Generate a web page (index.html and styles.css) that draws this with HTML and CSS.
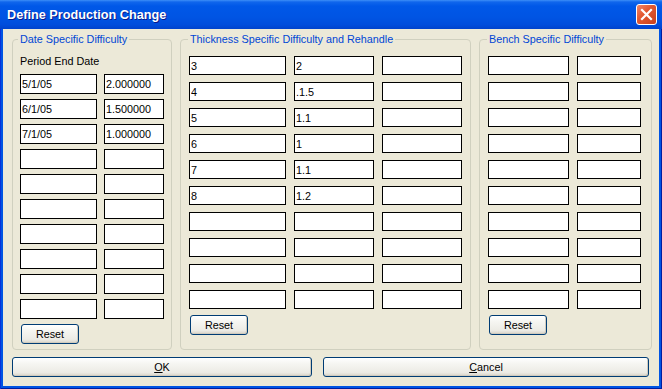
FILE: index.html
```html
<!DOCTYPE html>
<html lang="en">
<head>
  <meta charset="UTF-8" />
  <title>Define Production Change</title>
  <link rel="stylesheet" href="styles.css">
</head>
<body>
  <div class="window">
    <div class="titlebar">
      <span class="title">Define Production Change</span>
      <span class="close">
        <svg width="13" height="13" viewBox="0 0 13 13">
          <path d="M2 2 L11 11 M11 2 L2 11" stroke="#fff" stroke-width="2.2" stroke-linecap="square" />
        </svg>
      </span>
    </div>

    <div class="client">
      <div class="groups">
        <fieldset class="group group-date">
          <legend>Date Specific Difficulty</legend>
          <div class="period">Period End Date</div>
          <div class="grid grid-date">
            <input type="text" value="5/1/05"><input type="text" value="2.000000">
            <input type="text" value="6/1/05"><input type="text" value="1.500000">
            <input type="text" value="7/1/05"><input type="text" value="1.000000">
            <input type="text"><input type="text">
            <input type="text"><input type="text">
            <input type="text"><input type="text">
            <input type="text"><input type="text">
            <input type="text"><input type="text">
            <input type="text"><input type="text">
            <input type="text"><input type="text">
          </div>
          <button class="btn reset reset-date">Reset</button>
        </fieldset>

        <fieldset class="group group-thick">
          <legend>Thickness Specific Difficulty and Rehandle</legend>
          <div class="grid grid-thick">
            <input type="text" value="3"><input type="text" value="2"><input type="text">
            <input type="text" value="4"><input type="text" value=".1.5"><input type="text">
            <input type="text" value="5"><input type="text" value="1.1"><input type="text">
            <input type="text" value="6"><input type="text" value="1"><input type="text">
            <input type="text" value="7"><input type="text" value="1.1"><input type="text">
            <input type="text" value="8"><input type="text" value="1.2"><input type="text">
            <input type="text"><input type="text"><input type="text">
            <input type="text"><input type="text"><input type="text">
            <input type="text"><input type="text"><input type="text">
            <input type="text"><input type="text"><input type="text">
          </div>
          <button class="btn reset">Reset</button>
        </fieldset>

        <fieldset class="group group-bench">
          <legend>Bench Specific Difficulty</legend>
          <div class="grid grid-bench">
            <input type="text"><input type="text">
            <input type="text"><input type="text">
            <input type="text"><input type="text">
            <input type="text"><input type="text">
            <input type="text"><input type="text">
            <input type="text"><input type="text">
            <input type="text"><input type="text">
            <input type="text"><input type="text">
            <input type="text"><input type="text">
            <input type="text"><input type="text">
          </div>
          <button class="btn reset">Reset</button>
        </fieldset>
      </div>

      <div class="actions">
        <button class="btn ok"><u>O</u>K</button>
        <button class="btn cancel"><u>C</u>ancel</button>
      </div>
    </div>
  </div>
</body>
</html>
```

FILE: styles.css
```css
body {
  margin: 0;
  background: #0054e3;
  font-family: "Liberation Sans", Arial, sans-serif;
  font-size: 10.8px;
}

.window {
  width: 662px;
  height: 389px;
  display: flex;
  flex-direction: column;
  background: #0054e3;
  box-shadow: inset 1px 0 #0831d9, inset -1px 0 #001ea0, inset 0 -1px #001ea0;
}

.titlebar {
  height: 29px;
  display: flex;
  align-items: center;
  justify-content: space-between;
  padding: 0 5px 0 7px;
  background: linear-gradient(#3d8ff7 0, #1066ec 2px, #0058e8 6px, #0054e3 60%, #004ddc 85%, #0042cc 100%);
  box-sizing: border-box;
}

.title {
  color: #fff;
  font-family: "Liberation Sans", Arial, sans-serif;
  font-weight: bold;
  font-size: 12.7px;
  text-shadow: 1px 1px 0 #0a1a8a;
  padding-top: 1px;
}

.close {
  width: 21px;
  height: 21px;
  box-sizing: border-box;
  border: 1px solid #fff;
  border-radius: 3px;
  background: linear-gradient(135deg, #f0866a 0, #e35a32 40%, #c8401c 100%);
  display: flex;
  align-items: center;
  justify-content: center;
}

.client {
  height: 357px;
  margin: 0 3px 0 3px;
  background: #ece9d8;
  padding: 4px 7px 9px 9px;
  box-sizing: border-box;
  display: flex;
  flex-direction: column;
}

.groups {
  height: 317px;
  display: flex;
  gap: 8px;
}

.group {
  margin: 0;
  padding: 0;
  border: 1px solid #d0d0bf;
  border-radius: 4px;
  box-sizing: border-box;
}

.group legend {
  color: #0046d5;
  line-height: 13px;
  padding: 0 2px;
}

.group-date {
  width: 160px;
  padding-left: 7px;
}

.group-date legend {
  margin-left: -2px;
}

.group-thick {
  width: 291px;
  padding-left: 8px;
}

.group-thick legend {
  margin-left: -1px;
}

.group-bench {
  width: 173px;
  padding-left: 8px;
}

.group-bench legend {
  margin-left: -1px;
}

.period {
  line-height: 13px;
  margin: 9px 0 6px;
}

.grid {
  display: grid;
}

.grid-date {
  grid-template-columns: 77px 60px;
  grid-auto-rows: 20px;
  column-gap: 7px;
  row-gap: 5px;
}

.grid-thick {
  margin-top: 10px;
  grid-template-columns: 97px 80px 80px;
  grid-auto-rows: 19px;
  column-gap: 8px;
  row-gap: 7px;
}

.grid-bench {
  margin-top: 10px;
  grid-template-columns: 81px 64px;
  grid-auto-rows: 19px;
  column-gap: 8px;
  row-gap: 7px;
}

.grid input {
  width: 100%;
  height: 100%;
  margin: 0;
  box-sizing: border-box;
  border: 1px solid #000;
  background: #fff;
  padding: 0 1px;
  font-family: "Liberation Sans", Arial, sans-serif;
  font-size: 10.8px;
  color: #000;
  outline: none;
}

.btn {
  font-family: "Liberation Sans", Arial, sans-serif;
  font-size: 10.8px;
  color: #000;
  border: 1px solid #003c74;
  border-radius: 3px;
  background: linear-gradient(#ffffff 0, #f6f6f2 30%, #ecebe5 80%, #d8d3c8 100%);
  box-shadow: inset -1px -1px 0 #d0cbbe;
  padding: 0;
  margin: 0;
  box-sizing: border-box;
  height: 20px;
}

.reset {
  width: 58px;
  margin: 6px 0 0 1px;
  display: block;
}

.reset-date {
  margin-top: 5px;
}

.actions {
  display: flex;
  gap: 11px;
  margin-top: 7px;
}

.ok {
  width: 300px;
}

.cancel {
  width: 326px;
}
```
